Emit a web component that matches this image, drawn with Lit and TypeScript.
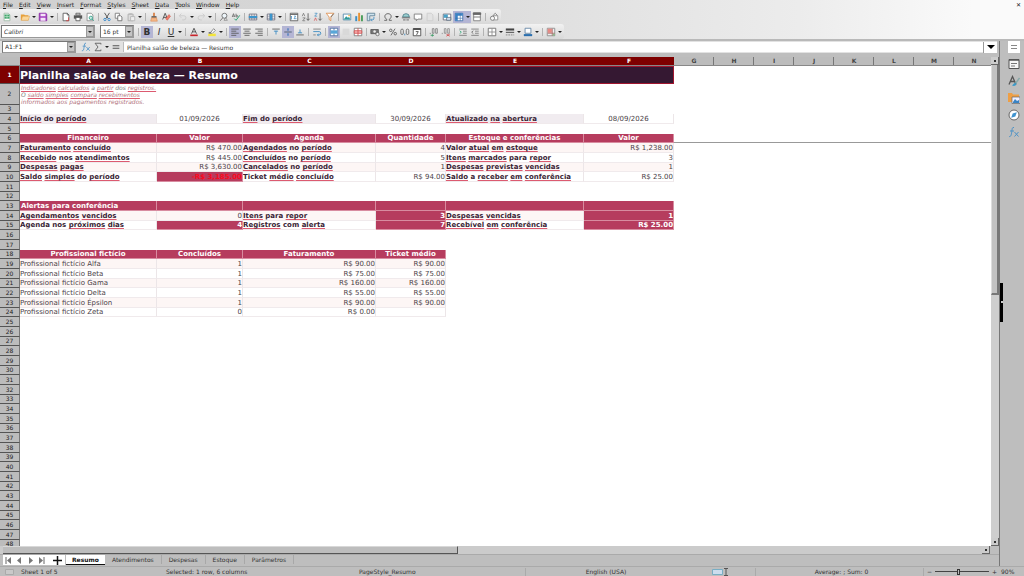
import { LitElement, html, css, svg, nothing } from "lit";
import { customElement } from "lit/decorators.js";
import { classMap } from "lit/directives/class-map.js";

const page = svg`<path d="M2.5 1.5h5l2 2v7h-7z" fill="#fff" stroke="#555"/>`;
const grid = svg`<path d="M1.5 2.5h9v7h-9z" fill="#fff" stroke="#667"/><path d="M1.5 5h9M1.5 7.500h9M4.500 2.500v7M7.500 2.500v7" stroke="#667" stroke-width=".7"/>`;

/* Toolbar glyphs, drawn on a 12 by 12 grid. */
const icons: Record<string, unknown> = {
  new: svg`<path d="M2.5 1.5h5l2 2v7h-7z" fill="#fff" stroke="#9bb8a4"/><path d="M3 3h6v5H3z" fill="#3fa56a"/><path d="M3 5.500h6M6 3v5" stroke="#d6efdf" stroke-width=".7"/>`,
  open: svg`<path d="M1 3h4l1 1h4v6H1z" fill="#e9a23b"/><path d="M3 5h8.500L10 10H1.500z" fill="#fbd79a" stroke="#d99335" stroke-width=".5"/>`,
  save: svg`<path d="M1.500 1.500h8l1 1v8h-9z" fill="#a33cc0" stroke="#8a2aa5"/><path d="M3 2h6v3H3zM3 7h6v3.500H3z" fill="#f3e4f7"/>`,
  pdf: svg`${page}<path d="M7.500 1.500v2h2" fill="none" stroke="#555"/><path d="M9 6.500v4M9 10.500H6" fill="none" stroke="#d33" stroke-width=".8"/>`,
  print: svg`<path d="M3.500 1.500h5v2h-5z" fill="#fff" stroke="#555"/><path d="M1 4h10v4H1z" fill="#555"/><path d="M3.500 6.500h5v4h-5z" fill="#fff" stroke="#555"/>`,
  preview: svg`<path d="M2.500 1.500h5l2 2v7h-7z" fill="#fff" stroke="#888"/><circle cx="7" cy="7" r="2" fill="#cfeee6" stroke="#2a9c86"/><path d="M8.500 8.500 10.500 10.500" stroke="#2a9c86"/>`,
  cut: svg`<path d="M3 1 7.500 8M9 1 4.500 8" stroke="#444" fill="none"/><circle cx="3.500" cy="9" r="1.400" fill="none" stroke="#2c82c9"/><circle cx="8.500" cy="9" r="1.400" fill="none" stroke="#2c82c9"/>`,
  copy: svg`<path d="M1.500 1.500h5v6h-5z" fill="#fff" stroke="#777"/><path d="M4.500 4.500h3.500l1.500 1.500v4.500h-5z" fill="#fff" stroke="#666"/>`,
  paste: svg`<path d="M2.500 2.500h6v8h-6z" fill="#ddd" stroke="#aaa"/><path d="M4 1.500h3v2H4z" fill="#bbb"/><path d="M5.500 5.500h5v5h-5z" fill="#eee" stroke="#b5b5b5"/>`,
  brush: svg`<path d="M5 1h2v4H5z" fill="#d77a3b"/><path d="M3 5h6v2H3z" fill="#555"/><path d="M3 7h6l1 4H2z" fill="#f5b888" stroke="#d97f45" stroke-width=".6"/>`,
  clear: svg`<path d="M2 9 5 1.500 8 9M3 6.500h4" stroke="#444" fill="none"/><path d="m5.500 8 4-5 2 2-4 5z" fill="#ef7c6c" stroke="#c4483a" stroke-width=".5"/>`,
  undo: svg`<path d="M4 2 1.500 4.500 4 7M2 4.500h5a2.500 2.500 0 0 1 0 5H5" stroke="#c9c9c9" fill="none"/>`,
  redo: svg`<path d="M8 2l2.500 2.500L8 7M10 4.500H5a2.500 2.500 0 0 0 0 5h2" stroke="#c9c9c9" fill="none"/>`,
  find: svg`<circle cx="6.500" cy="4.500" r="3" fill="#eef6fb" stroke="#666"/><path d="M4.500 7 1.500 10.500" stroke="#666"/><path d="M6 10h4l-2-3.500z" fill="none" stroke="#777" stroke-width=".7"/>`,
  spell: svg`<path d="M1.500 6 3 2l1.500 4M2 5h2M6 2v4c3 0 3-2.500 0-2" stroke="#555" stroke-width=".8" fill="none"/><path d="m4 8 2 2 4.500-6" stroke="#35a77a" stroke-width="1.200" fill="none"/>`,
  rows: svg`${grid}<path d="M1 4.800h10v2.400H1z" fill="#3c95cc"/>`,
  cols: svg`${grid}<path d="M4.500 2h3v8h-3z" fill="#3c95cc"/>`,
  sort: svg`<path d="M1.500 1.500h9v9h-9z" fill="#fff" stroke="#555"/><path d="M1.500 3h9" stroke="#555"/><path d="M3 9V5l-1 1M6 5h2L6 8h3" stroke="#2d7fb9" fill="none" stroke-width=".8"/>`,
  asc: svg`<path d="M1.500 5 3 1.500 4.500 5M2 7h3L2 10.500h3" stroke="#666" stroke-width=".8" fill="none"/><path d="M8.500 1.500v8.500M6.500 8l2 2 2-2" stroke="#555" fill="none"/>`,
  desc: svg`<path d="M2 1.500h3L2 5h3" stroke="#3487c0" stroke-width=".8" fill="none"/><path d="M1.500 10.500 3 7l1.500 3.500" stroke="#d34a4a" stroke-width=".8" fill="none"/><path d="M8.500 1.500v8.500M6.500 8l2 2 2-2" stroke="#555" fill="none"/>`,
  filter: svg`<path d="M1.500 1.500h9L7 6v4.500L5 9V6z" fill="#fff" stroke="#dd8b48"/><path d="m7 6 3.500-4" stroke="#666"/>`,
  image: svg`<path d="M1.500 2.500h9v7h-9z" fill="#fff" stroke="#4b86a8"/><path d="m2 9 3-4 2 2 1.500-1L10 9z" fill="#2f9a9a"/><circle cx="8.500" cy="4.300" r="1" fill="#f2b33d"/>`,
  chart: svg`<path d="M1.500 5h2.300v6H1.500z" fill="#3b8fc7"/><path d="M5 1h2.300v10H5z" fill="#e79233"/><path d="M8.400 4h2.300v7H8.400z" fill="#4a9e5c"/>`,
  pivot: svg`<path d="M1.500 1.500h9v3h-6v6h-3z" fill="#cfe3ee" stroke="#5b7f94"/><path d="M9.500 6v1.500a2 2 0 0 1-2 2H6m1-1.500L5.500 9.500 7 11" fill="none" stroke="#3487c0"/>`,
  omega: svg`<path d="M1.500 10h3V8.800C1 7 1.500 2 6 2s5 5 1.500 6.800V10h3" stroke="#555" fill="none"/>`,
  link: svg`<path d="M2 6a4 4 0 0 1 8 0z" fill="#9bd0d0" stroke="#4a7c88"/><path d="M1 7h10" stroke="#555"/><path d="M2.500 9.500h3m1 0h3" stroke="#555"/>`,
  comment: svg`<path d="M1.500 2.500h9v6H6l-2 2v-2H1.500z" fill="#fff" stroke="#777"/>`,
  header: svg`<path d="M2.500 1.500h5l2 2v7h-7z" fill="#e3e3e3" stroke="#ccc"/>`,
  printarea: svg`<path d="M1.500 2.500h9v7h-9z" fill="#fff" stroke="#667"/><path d="M2 3h5v4H2z" fill="#4aa3c9"/><path d="M5.500 6.500h5v3.500h-5z" fill="#cde" stroke="#456" stroke-width=".7"/>`,
  freeze: svg`<path d="M1.500 1.500h9v9h-9z" fill="#fff" stroke="#3a6ca8"/><path d="M1.500 1.500h9v3h-6v6h-3z" fill="#3b82c4"/><path d="M1.500 7.500h9M7.500 1.500v9" stroke="#3a6ca8" stroke-width=".7"/>`,
  split: svg`<path d="M2 1.500h8v9H2z" fill="#fff" stroke="#777"/><path d="M1.500 1h9v2h-9zM2 6h8" stroke="#666" fill="#666"/>`,
  draw: svg`<path d="M4.500 4.500h6v5h-6z" fill="#fff" stroke="#888"/><circle cx="4.200" cy="7.500" r="2.500" fill="#f5f5f5" stroke="#777"/><path d="m5 4 2.500-2.500L10 4" fill="none" stroke="#777"/>`,
  left: svg`<path d="M1.500 2.500h9M1.500 5h6M1.500 7.500h9M1.500 10h6" stroke="#555"/>`,
  center: svg`<path d="M1.500 2.500h9M3 5h6M1.500 7.500h9M3 10h6" stroke="#555"/>`,
  right: svg`<path d="M1.500 2.500h9M4.500 5h6M1.500 7.500h9M4.500 10h6" stroke="#555"/>`,
  top: svg`<path d="M1.500 2.500h9" stroke="#555"/><path d="M3.500 5h5M6 4.500V9" stroke="#3487c0"/>`,
  middle: svg`<path d="M1.500 6h9" stroke="#456"/><path d="M6 1.500v3M6 7.500v3" stroke="#3a74b8" stroke-width="1.400"/>`,
  bottom: svg`<path d="M1.500 9.500h9" stroke="#555"/><path d="M3.500 7h5M6 3v4" stroke="#3487c0"/>`,
  wrap: svg`<path d="M1.500 2.500h9M1.500 9.500h3" stroke="#777"/><path d="M1.500 5.500h7a2 2 0 0 1 0 4H6.500M8 8 6.500 9.500 8 11" stroke="#3487c0" fill="none"/>`,
  merge: svg`<path d="M1.500 1.500h9v9h-9z" fill="#fff" stroke="#4a6da0"/><path d="M2 4h8v4H2z" fill="#58a6d8"/><path d="M6 1.500V4M6 8v2.500" stroke="#4a6da0"/>`,
  mergeoff: svg`<path d="M2 2h8v8H2z" fill="#d9d9d9"/>`,
  unmerge: svg`<path d="M1.500 1.500h9v9h-9z" fill="#fff" stroke="#777"/><path d="M1.500 4.500h9v3h-9z" fill="#f6b7b7" stroke="#d24b4b"/><path d="M6 1.500v9" stroke="#d24b4b"/>`,
  currency: svg`<path d="M1 3h9v5H1z" fill="#777" stroke="#555"/><circle cx="5.500" cy="5.500" r="1.500" fill="#eee"/><circle cx="9" cy="8.500" r="2" fill="#eee" stroke="#555" stroke-width=".8"/>`,
  percent: svg`<circle cx="3.300" cy="4" r="1.500" fill="none" stroke="#555"/><circle cx="8.700" cy="8" r="1.500" fill="none" stroke="#555"/><path d="M8.500 2 3.500 10" stroke="#555"/>`,
  number: svg`<rect x="1" y="2.500" width="3" height="6.500" rx="1.500" fill="none" stroke="#555" stroke-width=".9"/><rect x="7.500" y="2.500" width="3" height="6.500" rx="1.500" fill="none" stroke="#555" stroke-width=".9"/><path d="M5.700 8v2" stroke="#3487c0"/>`,
  date: svg`<path d="M1.500 2h9v8.500h-9z" fill="#fff" stroke="#444"/><path d="M1.500 2.500h9" stroke="#444" stroke-width="2"/><path d="M4.500 5.500h3l-2 4" fill="none" stroke="#444"/>`,
  adddec: svg`<path d="M1.500 8.500V7M4 2h2v5.500H4zM8 2h2v5.500H8z" fill="none" stroke="#666" stroke-width=".8"/><path d="M2 10h4M4 8.500v3" stroke="#3a9a64"/>`,
  deldec: svg`<path d="M1.500 8.500V7M4 2h2v5.500H4zM8 2h2v5.500H8z" fill="none" stroke="#777" stroke-width=".8"/><path d="M6.500 8.500 10.500 11M10.500 8.500 6.500 11" stroke="#d24b4b"/>`,
  indent: svg`<path d="M1.500 2.500h9M6 5h4.500M6 7.500h4.500M1.500 10h9" stroke="#777"/><path d="m2 4.500 2 1.700-2 1.800" stroke="#35a77a" fill="none"/>`,
  outdent: svg`<path d="M1.500 2.500h9M6 5h4.500M6 7.500h4.500M1.500 10h9" stroke="#777"/><path d="M4 4.500 2 6.200 4 8" stroke="#666" fill="none"/>`,
  borders: svg`<path d="M1.500 1.500h9v9h-9z" fill="#fff" stroke="#666"/><path d="M6 2v8M2 6h8" stroke="#888"/>`,
  linestyle: svg`<path d="M1 3h10" stroke="#444" stroke-width="2.500"/><path d="M1 6.500h10" stroke="#666" stroke-width="1.500"/><path d="M1 9.500h10" stroke="#777" stroke-dasharray="2 1"/>`,
  linecolor: svg`<path d="M2.500 1.500h7v6h-7z" fill="#fff" stroke="#5b7fa0"/><path d="M1 8.500h10V11H1z" fill="#2a6fae"/>`,
  cond: svg`<path d="M1.500 1.500h9v9h-9z" fill="#eee" stroke="#888"/><path d="M2 2h5v5H2z" fill="#e88a84"/><path d="M7.500 2v8.500M2 7.500h8.500" stroke="#a66"/><path d="M8 8h2.500v2.500H8z" fill="#8cb88c"/>`,
  fontcolor: svg`<path d="M3 8 6 1.500 9 8M4 5.800h4" stroke="#444" fill="none"/><path d="M1.500 9h9v2h-9z" fill="#c8242b"/>`,
  hilite: svg`<path d="m4 7 4-5 2 2-4 4z" fill="#fff" stroke="#777"/><path d="M1.500 8h9v3h-9z" fill="#f4e53a"/><path d="M2 6h3v2H2z" fill="#777"/>`,
  fx: svg`<path d="M6 1.500C4 1 4.200 3 3.800 5.500 3.300 9 3 11 1 10.500M2 5h4" stroke="#4d92c6" fill="none"/><path d="m6.500 6 4 4.500M10.500 6l-4 4.500" stroke="#4d92c6" fill="none"/>`,
  sum: svg`<path d="M9.500 3V1.500h-7L6 6l-3.500 4.500h7V9" stroke="#555" fill="none"/>`,
  equals: svg`<path d="M2 4.500h8M2 7.500h8" stroke="#555" stroke-width="1.200"/>`,
  menu: svg`<path d="M0 0h12v12H0z" fill="#fff"/><path d="M3 4.500h6M3 7.500h6" stroke="#888"/>`,
  props: svg`<path d="M1 1.500h10v9H1z" fill="#f7f7f7" stroke="#555"/><path d="M1 2h10" stroke="#555" stroke-width="1.500"/><path d="M3 5.500h6M3 8h4" stroke="#777"/>`,
  styles: svg`<path d="M1 9.500 4.500 1.500 8 9.500M2.500 6.500h4" stroke="#555" stroke-width="1.300" fill="none"/><path d="M11.500 3 7.500 8.500" stroke="#8aa" stroke-width="1.500"/><path d="M4 10.500c2 1 4 .5 4.500-2l-2-.5z" fill="#3a9ac9"/>`,
  gallery: svg`<path d="M0 1h4l1 1.500h6V10H0z" fill="#ee9f45"/><path d="M4 5h8v6.500H4z" fill="#eef" stroke="#666" stroke-width=".7"/><path d="m5 10 2-3 2 2 2-1v3H5z" fill="#3a84c4"/>`,
  navigator: svg`<circle cx="6" cy="6" r="5" fill="#fff" stroke="#666"/><path d="m8.800 3.200-1.500 4.300-4.100 1.300 1.500-4.300z" fill="#3f93cf"/>`,
};

const icon = (n: string) => svg`<svg viewBox="0 0 12 12" class="ico" aria-hidden="true">${icons[n]}</svg>`;

/* "|" is a separator; a trailing "v" after a space adds a drop-down arrow and "!" marks a pressed button. */
const standardBar = "new v,open v,save v,|,pdf,print,preview,|,cut,copy,paste v,|,brush,clear,|,undo v,redo v,|,find,spell,|,rows v,cols v,|,sort,asc,desc,filter,|,image,chart,pivot,|,omega v,link,comment,header,|,printarea,freeze !v,split,|,draw";
const formatBar = "B !,I,U v,|,fontcolor v,hilite v,|,left !,center,right,|,top,middle !,bottom,|,wrap,|,merge !,mergeoff,unmerge,|,currency v,percent,number,date,|,adddec,deldec,|,indent,outdent,|,borders v,linestyle v,linecolor v,|,cond v";

const menus = ["File", "Edit", "View", "Insert", "Format", "Styles", "Sheet", "Data", "Tools", "Window", "Help"];
const columns = "ABCDEFGHIJKLMN".split("");
const sheets = ["Resumo", "Atendimentos", "Despesas", "Estoque", "Parâmetros"];

/* A cell is "style:text"; words between underscores are flagged by the spell checker. */
const cells: Record<number, string[]> = {
  4: ["label:_Início_ do _período_", "date:01/09/2026", "label:_Fim_ do _período_", "date:30/09/2026", "label:_Atualizado_ _na_ _abertura_", "date:08/09/2026"],
  6: ["head:Financeiro", "head:Valor", "head:Agenda", "head:Quantidade", "head:Estoque e conferências", "head:Valor"],
  7: ["bold tint:_Faturamento_ _concluído_", "num tint:R$ 470.00", "bold tint:_Agendados_ no _período_", "num tint:4", "bold tint:Valor _atual_ _em_ _estoque_", "num tint:R$ 1,238.00"],
  8: ["bold:_Recebido_ nos _atendimentos_", "num:R$ 445.00", "bold:_Concluídos_ no _período_", "num:5", "bold:_Itens_ _marcados_ para _repor_", "num:3"],
  9: ["bold tint:_Despesas_ _pagas_", "num tint:R$ 3,630.00", "bold tint:_Cancelados_ no _período_", "num tint:1", "bold tint:_Despesas_ _previstas_ _vencidas_", "num tint:1"],
  10: ["bold:_Saldo_ _simples_ do _período_", "num alert neg:-R$ 3,185.00", "bold:Ticket _médio_ _concluído_", "num:R$ 94.00", "bold:_Saldo_ a _receber_ _em_ _conferência_", "num:R$ 25.00"],
  13: ["head start:Alertas para conferência", "head:", "head:", "head:", "head:", "head:"],
  14: ["bold tint:_Agendamentos_ _vencidos_", "num tint:0", "bold tint:_Itens_ para _repor_", "num alert:3", "bold tint:_Despesas_ _vencidas_", "num alert:1"],
  15: ["bold:Agenda nos _próximos_ _dias_", "num alert:4", "bold:_Registros_ com _alerta_", "num alert:7", "bold:_Recebível_ _em_ _conferência_", "num alert:R$ 25.00"],
  18: ["head:Profissional fictício", "head:Concluídos", "head:Faturamento", "head:Ticket médio"],
  19: ["tint:Profissional fictício Alfa", "num tint:1", "num tint:R$ 90.00", "num tint:R$ 90.00"],
  20: ["plain:Profissional fictício Beta", "num:1", "num:R$ 75.00", "num:R$ 75.00"],
  21: ["tint:Profissional fictício Gama", "num tint:1", "num tint:R$ 160.00", "num tint:R$ 160.00"],
  22: ["plain:Profissional fictício Delta", "num:1", "num:R$ 55.00", "num:R$ 55.00"],
  23: ["tint:Profissional fictício Épsilon", "num tint:1", "num tint:R$ 90.00", "num tint:R$ 90.00"],
  24: ["plain:Profissional fictício Zeta", "num:0", "num:R$ 0.00", "num:"],
};

const flagged = (t: string) => t.split("_").map((p, i) => (i % 2 ? html`<span class="typo">${p}</span>` : p));

@customElement("app-root")
export class AppRoot extends LitElement {
  static styles = css`
    :host { display: flex; flex-direction: column; height: 100vh; overflow: hidden; background: #bebebe; color: #333; font: 6px/8px "DejaVu Sans", sans-serif; }
    * { box-sizing: border-box; }
    button, input, select { font: inherit; color: inherit; border: 0; padding: 0; margin: 0; background: none; border-radius: 0; min-width: 0; outline: 0; }
    svg { display: block; }
    .top { background: linear-gradient(90deg, #d0d0d0, #d9d9d9 40%, #ececec 78%, #fafafa 95%); border-bottom: 2px solid #b9b9b9; }
    .menus { display: flex; height: 9px; align-items: center; padding: 0 2px; gap: 4px; }
    .menus button { padding: 0 1px; color: #222; }
    .menus .mnemonic::first-letter { text-decoration: underline; }
    .menus .close { margin-left: auto; }
    .bar { display: flex; width: max-content; height: 15px; align-items: center; padding: 0 1px; background: linear-gradient(#f2f2f2, #d8d8d8); border-radius: 0 3px 3px 0; }
    .group { display: flex; align-items: center; }
    .group.on { background: #b4b5d4; }
    .tool { width: 12px; height: 12px; display: grid; place-items: center; }
    .ico { width: 10px; height: 10px; }
    .letter { font-size: 9px; line-height: 12px; }
    .letter.B { font-weight: bold; }
    .letter.I { font-style: italic; }
    .letter.U { text-decoration: underline; }
    .caret { width: 6px; height: 12px; display: grid; place-items: center; }
    .caret::before, .arrow::before, .expand::before { content: ""; border: 2px solid transparent; border-top-color: #222; border-bottom: 0; }
    .sep { width: 1px; height: 8px; margin: 0 2px; background: #b3b3b3; }
    .combo { display: flex; height: 13px; background: #fff; border: 1px solid #777; border-right-color: #999; border-bottom-color: #999; }
    .combo select, .combo input { flex: 1; padding-left: 2px; appearance: none; }
    .arrow { width: 8px; display: grid; place-items: center; background: #c4c4c4; border: 1px solid #999; }
    .font { width: 94px; font-style: italic; }
    .size { width: 34px; margin: 0 2px 0 5px; }
    .main { flex: 1; display: flex; min-height: 0; }
    .doc { flex: 1; min-width: 0; display: flex; flex-direction: column; border-right: 1px solid #777; }
    .formula { display: flex; height: 12px; align-items: center; background: #e2e2e2; margin: 0 2px 4px 0; }
    .formula .group { height: 11px; }
    .name { width: 74px; height: 12px; margin: 0 4px 0 2px; }
    .line { flex: 1; height: 10px; background: #fff; padding-left: 3px; border-left: 1px solid #bbb; margin-left: 1px; }
    .expand { width: 14px; height: 11px; background: #fff; border-left: 1px solid #999; display: grid; place-items: center; }
    .expand::before { border-width: 4px 4px 0; border-top-color: #000; }
    .view { flex: 1; display: flex; min-height: 0; }
    .canvas { flex: 1; min-width: 0; overflow: hidden; background: #fff; }
    table { border-collapse: separate; border-spacing: 0; table-layout: fixed; width: 994px; }
    .w0 { width: 20px; } .wA { width: 137px; } .wB { width: 86px; } .wC { width: 133px; } .wD { width: 70px; } .wE { width: 138px; } .wF { width: 90px; } .wn { width: 40px; }
    th, td { padding: 0; overflow: hidden; white-space: nowrap; }
    thead th { height: 9px; font-size: 6px; line-height: 8px; background: #bcbcbc; color: #444; border-bottom: 1px solid #888; box-shadow: inset -1px 0 #777; }
    thead .corner { box-shadow: none; }
    thead .on { background: #7e0000; color: #fff; box-shadow: none; }
    tbody th { font-weight: normal; font-size: 6px; line-height: 8px; background: #bcbcbc; color: #222; border-bottom: 1px solid #555; border-right: 1px solid #777; }
    tbody tr { height: 10px; }
    tbody tr:nth-child(3n) { height: 9px; }
    tbody tr.r1 { height: 18px; }
    tbody tr.r2 { height: 21px; }
    .r1 th { background: #7e0000; color: #fff; font-weight: bold; }
    td { font-size: 7px; line-height: 8px; color: #4b4248; }
    .title { background: #351832; color: #fff; font-size: 11px; line-height: 15px; font-weight: bold; border: 1px solid #a0152f; border-left: 0; }
    .note { font-size: 6px; line-height: 7px; font-style: italic; color: #777; padding-left: 1px; vertical-align: top; }
    .typo { text-decoration: underline solid #dc5a70 1px; text-underline-offset: 1px; text-decoration-skip-ink: none; }
    .note .typo { color: #b0707a; }
    .label, .bold { font-weight: bold; color: #3a1f35; }
    .cell { border-right: 1px solid #ece6e8; border-bottom: 1px solid #f0eaec; }
    .label { background: #f1ecf0; }
    .tint { background: #fdf6f5; }
    .date { text-align: center; }
    .num { text-align: right; }
    .head { background: #b63c5e; color: #fff; font-weight: bold; text-align: center; border-color: #d88ca0; }
    .start { text-align: left; padding-left: 1px; }
    .alert { background: #b63c5e; color: #fff; font-weight: bold; border-color: #d88ca0; }
    .neg { color: #fa0a1e; }
    .frozen { border-bottom: 1px solid #999; }
    .vbar { width: 8px; display: flex; flex-direction: column; background: #cecece; }
    .vbar .thumb { height: 47%; flex: none; background: #c2c2c2; border-right: 2px solid #777; border-bottom: 2px solid #777; border-left: 1px solid #ddd; }
    .step { width: 8px; height: 8px; flex: none; display: grid; place-items: center; background: #ccc; border-right: 1px solid #666; border-bottom: 1px solid #666; }
    .step::before { content: ""; border: 1px solid #333; }
    .vbar .down { margin-top: auto; }
    .hbar { height: 8px; display: flex; background: #cbcbcb; margin-right: 9px; }
    .hbar .thumb { width: 46%; margin-left: 3px; background: #bdbdbd; border-bottom: 1px solid #555; border-right: 1px solid #555; border-top: 1px solid #d8d8d8; }
    .hbar .step { margin-left: auto; }
    .tabs { display: flex; height: 12px; border-top: 1px solid #aaa; align-items: flex-start; }
    .nav { display: flex; background: #fff; margin: 0 1px 0 3px; height: 10px; }
    .nav button { width: 11px; display: grid; place-items: center; }
    .nav .add { width: 15px; margin-left: 3px; }
    .nav svg { width: 9px; height: 9px; }
    .tab { padding: 0 7px; height: 9px; border-right: 1px solid #a8a8a8; }
    .tab.on { height: 10px; background: #fff; font-weight: bold; color: #111; border-bottom: 1px solid #111; padding: 0 6px; border-right: 0; }
    .side { width: 24px; position: relative; display: flex; flex-direction: column; align-items: center; gap: 5px; padding-left: 3px; }
    .side .ico { width: 12px; height: 12px; }
    .side button { width: 12px; height: 12px; }
    .grip { position: absolute; left: 0; top: 46%; width: 3px; height: 39px; background: #000; display: grid; place-items: center; }
    .grip::before { content: ""; border: 1px solid #ccc; }
    .status { display: grid; grid-template-columns: 17px 145fr 193fr 170fr 157fr 73fr 168fr 74px 27px; height: 10px; border-top: 1px solid #aaa; align-items: center; color: #333; }
    .status span { padding-left: 4px; white-space: nowrap; }
    .status .mid { text-align: center; border-left: 1px solid #aaa; }
    .status svg { height: 8px; width: 13px; margin-left: 4px; }
    .status .mode { justify-self: center; width: 17px; }
    .zoom { display: flex; align-items: center; gap: 3px; padding-left: 3px; border-left: 1px solid #aaa; }
    .zoom input { appearance: none; flex: 1; height: 8px; background: linear-gradient(#444, #444) center / 100% 1px no-repeat; }
    .zoom input::-webkit-slider-thumb { appearance: none; width: 3px; height: 6px; background: #bbb; border: 1px solid #333; }
  `;

  private bar(spec: string) {
    return spec.split(",").map((item) => {
      if (item === "|") return html`<span class="sep"></span>`;
      const [name, flags = ""] = item.split(" ");
      const glyph = name.length === 1 ? html`<span class="letter ${name}">${name}</span>` : icon(name);
      return html`<span class=${classMap({ group: true, on: flags.includes("!") })}>
        <button class="tool" aria-label=${name}>${glyph}</button>${flags.includes("v") ? html`<button class="caret" aria-label="${name} options"></button>` : nothing}
      </span>`;
    });
  }

  private row(n: number) {
    if (n === 1) return html`<tr class="r1"><th scope="row">1</th><td class="title" colspan="6">Planilha salão de beleza — Resumo</td><td colspan="8"></td></tr>`;
    if (n === 2)
      return html`<tr class="r2"><th scope="row">2</th><td class="note" colspan="6">${flagged("_Indicadores_ _calculados_ a _partir_ dos _registros._")}<br />${flagged("O _saldo_ _simples_ _compara_ _recebimentos_")}<br />${flagged("_informados_ _aos_ _pagamentos_ _registrados._")}</td><td colspan="8"></td></tr>`;
    const list = cells[n] ?? [];
    return html`<tr><th scope="row">${n}</th>${columns.map((_, i) => {
      if (!list[i]) return html`<td class=${n === 6 ? "frozen" : ""}></td>`;
      const at = list[i].indexOf(":");
      return html`<td class="cell ${list[i].slice(0, at)}">${flagged(list[i].slice(at + 1))}</td>`;
    })}</tr>`;
  }

  render() {
    return html`
      <header class="top">
        <nav class="menus">${menus.map((m) => html`<button class="mnemonic">${m}</button>`)}<button class="close" aria-label="Close">✕</button></nav>
        <div class="bar">${this.bar(standardBar)}</div>
        <div class="bar">
          <div class="combo font"><select aria-label="Font name"><option>Calibri</option></select><span class="arrow"></span></div>
          <div class="combo size"><select aria-label="Font size"><option>16 pt</option></select><span class="arrow"></span></div>
          <span class="sep"></span>${this.bar(formatBar)}
        </div>
      </header>
      <div class="main">
        <div class="doc">
          <div class="formula">
            <div class="combo name"><input aria-label="Name box" value="A1:F1" /><span class="arrow"></span></div>
            ${this.bar("fx,sum v,equals")}
            <input class="line" aria-label="Formula" value="Planilha salão de beleza — Resumo" />
            <button class="expand" aria-label="Expand formula bar"></button>
          </div>
          <div class="view">
            <div class="canvas">
              <table>
                <colgroup><col class="w0" />${columns.map((c, i) => html`<col class=${i < 6 ? "w" + c : "wn"} />`)}</colgroup>
                <thead><tr><th class="corner"></th>${columns.map((c, i) => html`<th scope="col" class=${i < 6 ? "on" : ""}>${c}</th>`)}</tr></thead>
                <tbody>${Array.from({ length: 48 }, (_, i) => this.row(i + 1))}</tbody>
              </table>
            </div>
            <div class="vbar"><button class="step" aria-label="Scroll up"></button><div class="thumb"></div><button class="step down" aria-label="Scroll down"></button></div>
          </div>
          <div class="hbar"><div class="thumb"></div><button class="step" aria-label="Scroll right"></button></div>
          <div class="tabs">
            <div class="nav">
              <button aria-label="First sheet"><svg viewBox="0 0 9 9"><path d="M2 1v7" stroke="#666"/><path d="M7 1v7L3 4.500z" fill="#777"/></svg></button>
              <button aria-label="Previous sheet"><svg viewBox="0 0 9 9"><path d="M6 1v7L2 4.500z" fill="#777"/></svg></button>
              <button aria-label="Next sheet"><svg viewBox="0 0 9 9"><path d="M3 1v7l4-3.500z" fill="#777"/></svg></button>
              <button aria-label="Last sheet"><svg viewBox="0 0 9 9"><path d="M7 1v7" stroke="#666"/><path d="M2 1v7l4-3.500z" fill="#777"/></svg></button>
              <button class="add" aria-label="Add sheet"><svg viewBox="0 0 9 9"><path d="M4.500 0v9M0 4.500h9" stroke="#111" stroke-width="1.500"/></svg></button>
            </div>
            ${sheets.map((s, i) => html`<button class=${classMap({ tab: true, on: i === 0 })}>${s}</button>`)}
          </div>
        </div>
        <aside class="side">
          ${["menu", "props", "styles", "gallery", "navigator", "fx"].map((n) => html`<button aria-label=${n}>${icon(n)}</button>`)}
          <div class="grip"></div>
        </aside>
      </div>
      <footer class="status">
        <svg viewBox="0 0 13 8"><path d="M1.500 1.500h8v5h-8z" fill="#c9c9c9" stroke="#aaa"/></svg>
        <span>Sheet 1 of 5</span><span>Selected: 1 row, 6 columns</span><span>PageStyle_Resumo</span>
        <span class="mid">English (USA)</span>
        <svg class="mode" viewBox="0 0 17 8"><path d="M.5 1.500h10v5H.5z" fill="#cde" stroke="#79aec4"/><path d="M12 .5h4M14 .5v7M12 7.500h4" stroke="#555"/></svg>
        <span class="mid">Average: ; Sum: 0</span>
        <div class="zoom">−<input type="range" aria-label="Zoom" value="43" />+</div>
        <span>90%</span>
      </footer>
    `;
  }
}
